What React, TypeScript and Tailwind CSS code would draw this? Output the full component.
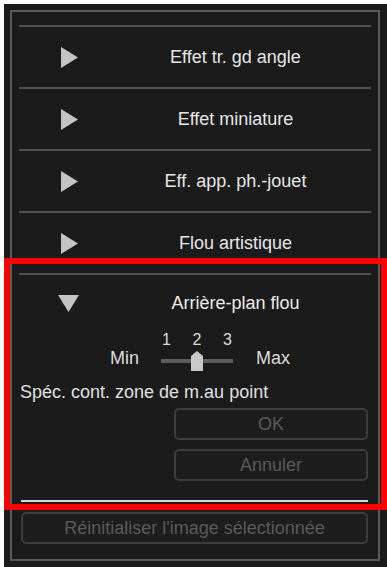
const rows = ["Effet tr. gd angle", "Effet miniature", "Eff. app. ph.-jouet", "Flou artistique"];

function RightArrow() {
  return (
    <svg width="17" height="21" viewBox="0 0 17 21" className="ml-[42px]">
      <polygon points="0,0 17,10.5 0,21" fill="#c4c4c4" />
    </svg>
  );
}

function DownArrow() {
  return (
    <svg width="21" height="17" viewBox="0 0 21 17" className="ml-[39px]">
      <polygon points="0,0 21,0 10.5,17" fill="#c4c4c4" />
    </svg>
  );
}

function Separator() {
  return <div className="h-[2px] bg-[#505050]" />;
}

function Row({ label }: { label: string }) {
  return (
    <>
      <Separator />
      <div className="h-[60px] flex items-center">
        <div className="w-[81px] flex items-center">
          <RightArrow />
        </div>
        <div className="flex-1 text-center text-[18px] text-[#e6e6e6]">{label}</div>
      </div>
    </>
  );
}

function DimButton({ label, className }: { label: string; className: string }) {
  return (
    <div
      className={
        "h-[32px] rounded-[5px] border-2 border-[#3d3d3d] bg-[#1d1d1d] flex items-center justify-center text-[18px] text-[#5a5a5a] " +
        className
      }
    >
      {label}
    </div>
  );
}

export default function App() {
  return (
    <div className="w-[387px] h-[567px] bg-white pt-[4px] pl-[4px] relative font-['Liberation_Sans',Arial,sans-serif] overflow-hidden">
      <div className="h-full bg-[#1b1b1b] pt-[6px] pl-[6px] pr-[7px] pb-[6px]">
        <div className="h-full border-2 border-[#5a5a5a] px-[7px] pt-[13px] flex flex-col">
          {rows.map((r) => (
            <Row key={r} label={r} />
          ))}

          {/* expanded section */}
          <Separator />
          <div className="h-[56px] flex items-center">
            <div className="w-[81px] flex items-center">
              <DownArrow />
            </div>
            <div className="flex-1 text-center text-[18px] text-[#ededed]">Arrière-plan flou</div>
          </div>

          <div className="h-[44px] flex items-start pl-[91px] text-[18px] text-[#dcdcdc]">
            <div className="mt-[17px] leading-[20px]">Min</div>
            <div className="w-[72px] ml-[22px] flex flex-col">
              <div className="h-[16px] flex justify-between px-[1px] text-[16px] leading-[16px] mt-[1px]">
                <span>1</span>
                <span>2</span>
                <span>3</span>
              </div>
              <div className="h-[24px] relative">
                <div className="absolute left-0 right-0 top-[11px] h-[4px] bg-[#5e5e5e]" />
                <svg width="12" height="20" viewBox="0 0 12 20" className="absolute left-[30px] top-[3px]">
                  <polygon points="0,5 6,0 12,5 12,20 0,20" fill="#c9c9c9" />
                </svg>
              </div>
            </div>
            <div className="mt-[17px] leading-[20px] ml-[23px]">Max</div>
          </div>

          <div className="mt-[6px] pl-[1px] text-[18px] leading-[22px] text-[#e0e0e0]">
            Spéc. cont. zone de m.au point
          </div>

          <DimButton label="OK" className="mt-[5px] ml-[155px] w-[194px]" />
          <DimButton label="Annuler" className="mt-[9px] ml-[155px] w-[194px]" />

          <div className="mt-[19px] ml-[2px] w-[347px] h-[2px] bg-[#d6d6d6]" />

          <DimButton label="Réinitialiser l'image sélectionnée" className="mt-[10px] ml-[2px] w-[347px]" />
        </div>
      </div>

      {/* red highlight frame */}
      <div className="absolute left-[4px] top-[258px] w-[383px] h-[252px] border-[6px] border-[#ff0000] pointer-events-none" />
    </div>
  );
}
